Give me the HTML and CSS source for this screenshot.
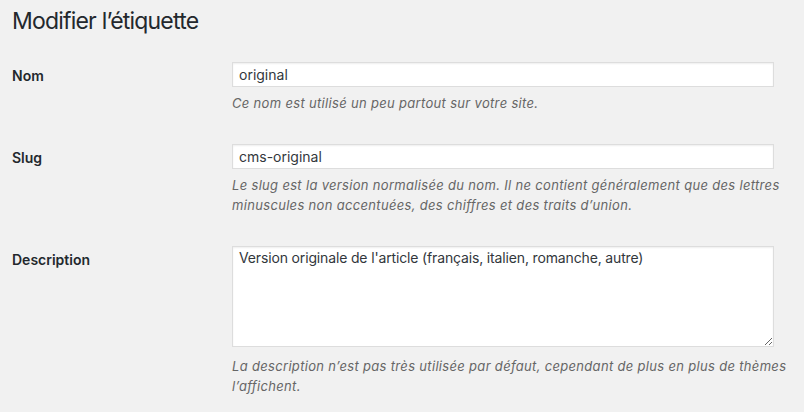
FILE: index.html
```html
<!DOCTYPE html>
<html lang="fr">
<head>
<meta charset="utf-8">
<title>Modifier l’étiquette</title>
<link rel="stylesheet" href="styles.css">
</head>
<body>
<div class="wrap">
  <h1 class="page-title">Modifier l’étiquette</h1>
  <form class="edit-form">
    <div class="field">
      <label class="field-label" for="name">Nom</label>
      <div class="field-main">
        <input class="text-input" id="name" type="text" value="original">
        <p class="description">Ce nom est utilisé un peu partout sur votre site.</p>
      </div>
    </div>
    <div class="field">
      <label class="field-label" for="slug">Slug</label>
      <div class="field-main">
        <input class="text-input" id="slug" type="text" value="cms-original">
        <p class="description">Le slug est la version normalisée du nom. Il ne contient généralement que des lettres minuscules non accentuées, des chiffres et des traits d’union.</p>
      </div>
    </div>
    <div class="field">
      <label class="field-label" for="description">Description</label>
      <div class="field-main">
        <textarea class="text-area" id="description">Version originale de l'article (français, italien, romanche, autre)</textarea>
        <p class="description description-after-area">La description n’est pas très utilisée par défaut, cependant de plus en plus de thèmes l’affichent.</p>
      </div>
    </div>
  </form>
</div>
</body>
</html>
```

FILE: styles.css
```css
html, body {
  margin: 0;
  padding: 0;
  background: #f1f1f1;
}

body {
  font-family: Inter, "Noto Sans", "Liberation Sans", sans-serif;
  color: #23282d;
}

.wrap {
  padding: 0 12px;
}

.page-title {
  margin: 0;
  padding-top: 6px;
  font-size: 23px;
  font-weight: 400;
  line-height: 30px;
  letter-spacing: -0.8px;
  color: #23282d;
}

.edit-form {
  margin-top: 11px;
}

.field {
  display: grid;
  grid-template-columns: 220px 560px;
  padding: 15px 0 16px;
}

.field-label {
  padding-top: 5px;
  font-size: 14px;
  font-weight: 600;
  line-height: 18px;
  color: #23282d;
}

.field-main {
  display: flex;
  flex-direction: column;
  align-items: flex-start;
}

.text-input {
  box-sizing: border-box;
  width: 542px;
  height: 25px;
  margin: 0;
  padding: 0 6px;
  border: 1px solid #ddd;
  border-radius: 0;
  background: #fff;
  box-shadow: inset 0 1px 2px rgba(0, 0, 0, 0.07);
  font-family: inherit;
  font-size: 14px;
  line-height: 21px;
  color: #32373c;
  outline: none;
}

.text-area {
  box-sizing: border-box;
  display: block;
  width: 542px;
  height: 101px;
  margin: 0;
  padding: 1px 6px;
  border: 1px solid #ddd;
  border-radius: 0;
  background: #fff;
  box-shadow: inset 0 1px 2px rgba(0, 0, 0, 0.07);
  font-family: inherit;
  font-size: 14px;
  line-height: 20px;
  letter-spacing: -0.15px;
  color: #32373c;
  outline: none;
}

.description {
  margin: 6px 0 0;
  font-size: 13px;
  font-style: italic;
  line-height: 20px;
  letter-spacing: 0.32px;
  color: #666;
}

.description-after-area {
  margin-top: 9px;
}
```
